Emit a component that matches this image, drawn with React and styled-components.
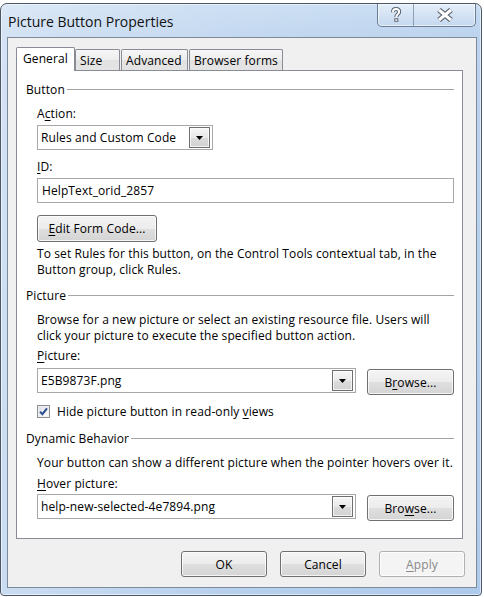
import React from 'react';
import styled, { createGlobalStyle } from 'styled-components';

const GlobalStyle = createGlobalStyle`
  html, body { margin: 0; padding: 0; background: #fff; }
  body {
    font-family: "Open Sans", "Noto Sans", "Liberation Sans", sans-serif;
    font-size: 12px;
    letter-spacing: 0.1px;
    color: #000;
  }
  * { box-sizing: border-box; }
  u { text-underline-offset: 2px; }
`;

const Window = styled.div`
  margin-top: 3px;
  width: 482px;
  height: 593px;
  border: 1px solid #4a5868;
  border-radius: 7px 7px 4px 4px;
  padding: 0 4px 7px 6px;
  display: flex;
  flex-direction: column;
  background:
    linear-gradient(90deg, rgba(255,255,255,0.35) 0%, rgba(255,255,255,0.12) 45%, rgba(255,255,255,0) 100%),
    linear-gradient(180deg, #c8dcf2 0%, #bcd3ee 34px, #aecaeb 100%);
  box-shadow: inset 0 0 0 1px rgba(255,255,255,0.55);
`;

const TitleBar = styled.div`
  height: 33px;
  display: flex;
  justify-content: space-between;
  align-items: flex-start;
`;

const TitleText = styled.div`
  margin: 8px 0 0 1px;
  font-size: 14px;
  letter-spacing: 0;
  line-height: 20px;
  color: #111;
`;

const Caption = styled.div`
  display: flex;
  height: 23px;
  margin-right: 1px;
  border: 1px solid #6b7d94;
  border-top: none;
  border-radius: 0 0 5px 5px;
  background: linear-gradient(180deg, #e4eef9 0%, #d4e3f4 50%, #c4d8ef 100%);
  box-shadow: inset 0 0 0 1px rgba(255,255,255,0.6);
  overflow: hidden;
`;

const CapBtn = styled.div`
  width: ${p => p.$w}px;
  display: flex;
  align-items: center;
  justify-content: center;
  & + & { border-left: 1px solid #8ea1b9; }
`;

const Client = styled.div`
  flex: 1;
  border: 1px solid #7d8a99;
  background: #f0f0f0;
  padding: 9px 0 0 8px;
  display: flex;
  flex-direction: column;
`;

const TabRow = styled.div`
  display: flex;
  align-items: flex-end;
  height: 23px;
  position: relative;
  z-index: 1;
`;

const Tab = styled.div`
  width: ${p => p.$w}px;
  height: ${p => (p.$active ? 24 : 21)}px;
  margin-bottom: ${p => (p.$active ? -1 : 0)}px;
  margin-left: ${p => p.$ml || 0}px;
  border: 1px solid #898c95;
  border-bottom: none;
  border-radius: 2px 2px 0 0;
  background: ${p => (p.$active
    ? '#fff'
    : 'linear-gradient(180deg, #f6f6f6 0%, #ededed 50%, #e2e2e2 51%, #e4e4e4 100%)')};
  padding: 3px 0 0 ${p => (p.$active ? 6 : 4)}px;
  line-height: 16px;
  white-space: nowrap;
  position: relative;
  z-index: ${p => (p.$active ? 2 : 0)};
`;

const Panel = styled.div`
  width: 447px;
  height: 469px;
  border: 1px solid #898c95;
  background: #fff;
  padding: 11px 8px 0 9px;
  display: flex;
  flex-direction: column;
`;

const Heading = styled.div`
  display: flex;
  align-items: center;
  height: 16px;
  line-height: 16px;
  margin-top: ${p => p.$mt || 0}px;
  white-space: nowrap;
  &::after {
    content: '';
    flex: 1;
    height: 1px;
    background: #a3a3a3;
    margin: -1px 0 0 2px;
  }
`;

const Indent = styled.div`
  margin-left: 11px;
  display: flex;
  flex-direction: column;
`;

const Label = styled.div`
  height: 16px;
  line-height: 16px;
  margin-top: ${p => p.$mt || 0}px;
  white-space: nowrap;
`;

const Para = styled.div`
  line-height: 16px;
  margin-top: ${p => p.$mt || 0}px;
  white-space: nowrap;
`;

const Select = styled.div`
  width: ${p => p.$w}px;
  height: 25px;
  margin-top: ${p => p.$mt || 0}px;
  border: 1px solid #a8a8a8;
  background: #fff;
  display: flex;
  align-items: center;
  padding-left: 3px;
  white-space: nowrap;
`;

const ArrowBox = styled.div`
  margin-left: auto;
  margin-right: 2px;
  width: 21px;
  height: 21px;
  border: 1px solid #6f6f6f;
  background: linear-gradient(180deg, #f6f6f6 0%, #e9e9e9 50%, #dcdcdc 51%, #d2d2d2 100%);
  box-shadow: inset 0 0 0 1px rgba(255,255,255,0.7);
  display: flex;
  align-items: center;
  justify-content: center;
  flex-shrink: 0;
`;

const TextBox = styled.div`
  height: 25px;
  margin-top: ${p => p.$mt || 0}px;
  border: 1px solid #a8a8a8;
  background: #fff;
  display: flex;
  align-items: center;
  padding-left: 4px;
`;

const Button = styled.div`
  width: ${p => p.$w}px;
  height: ${p => p.$h || 26}px;
  margin-top: ${p => p.$mt || 0}px;
  border: 1px solid ${p => (p.$disabled ? '#adb2b5' : '#707070')};
  border-radius: 3px;
  background: ${p => (p.$disabled
    ? '#f4f4f4'
    : 'linear-gradient(180deg, #f4f4f4 0%, #ececec 50%, #dfdfdf 51%, #d4d4d4 100%)')};
  box-shadow: inset 0 0 0 1px rgba(255,255,255,0.75);
  color: ${p => (p.$disabled ? '#8a8a8a' : '#000')};
  display: flex;
  align-items: center;
  justify-content: center;
  white-space: nowrap;
  flex-shrink: 0;
`;

const Row = styled.div`
  display: flex;
  justify-content: space-between;
  align-items: flex-start;
  margin-top: ${p => p.$mt || 0}px;
  & > ${Button} { margin-top: 1px; }
`;

const CheckRow = styled.div`
  display: flex;
  align-items: center;
  height: 16px;
  margin-top: ${p => p.$mt || 0}px;
  gap: 7px;
`;

const CheckBox = styled.div`
  width: 13px;
  height: 13px;
  border: 1px solid #8e8f8f;
  background: linear-gradient(135deg, #d8dde6 0%, #f4f6f9 70%, #ffffff 100%);
  box-shadow: inset 0 0 0 1px #f0f0f0;
  display: flex;
  align-items: center;
  justify-content: center;
`;

const Footer = styled.div`
  display: flex;
  justify-content: flex-end;
  gap: 13px;
  margin-top: 12px;
  padding-right: 11px;
`;

const Arrow = () => (
  <ArrowBox>
    <svg width="7" height="4" viewBox="0 0 7 4"><polygon points="0,0 7,0 3.5,4" fill="#000" /></svg>
  </ArrowBox>
);

const HelpGlyph = () => (
  <svg width="12" height="16" viewBox="0 0 12 16">
    <g fill="none" strokeLinecap="butt">
      <path d="M3 5.2 C3 3 4.4 2 6 2 C8 2 9.2 3.2 9.2 4.8 C9.2 7 6.3 7.3 6.3 10" stroke="#5b6370" strokeWidth="4" />
      <rect x="4.3" y="11.3" width="4" height="3.5" fill="#5b6370" stroke="none" />
      <path d="M3 5.2 C3 3 4.4 2 6 2 C8 2 9.2 3.2 9.2 4.8 C9.2 7 6.3 7.3 6.3 10" stroke="#fff" strokeWidth="2" />
      <rect x="5.3" y="12.3" width="2" height="1.6" fill="#fff" stroke="none" />
    </g>
  </svg>
);

const CloseGlyph = () => (
  <svg width="18" height="14" viewBox="0 0 18 14">
    <g strokeLinecap="butt">
      <path d="M3 2 L15 12 M15 2 L3 12" stroke="#5b6370" strokeWidth="5.4" />
      <path d="M3 2 L15 12 M15 2 L3 12" stroke="#fff" strokeWidth="3" />
    </g>
  </svg>
);

export default function App() {
  return (
    <>
      <GlobalStyle />
      <Window>
        <TitleBar>
          <TitleText>Picture Button Properties</TitleText>
          <Caption>
            <CapBtn $w={35}><HelpGlyph /></CapBtn>
            <CapBtn $w={62}><CloseGlyph /></CapBtn>
          </Caption>
        </TitleBar>
        <Client>
          <TabRow>
            <Tab $active $w={59}>General</Tab>
            <Tab $w={45}>Size</Tab>
            <Tab $w={67} $ml={1}>Advanced</Tab>
            <Tab $w={94} $ml={1}>Browser forms</Tab>
          </TabRow>
          <Panel>
            <Heading>Button</Heading>
            <Indent>
              <Label $mt={8}>A<u>c</u>tion:</Label>
              <Select $w={176} $mt={3}>
                Rules and Custom Code
                <Arrow />
              </Select>
              <Label $mt={9}><u>I</u>D:</Label>
              <TextBox $mt={3}>HelpText_orid_2857</TextBox>
              <Button $w={120} $h={27} $mt={12}><span><u>E</u>dit Form Code...</span></Button>
              <Para $mt={4}>
                To set Rules for this button, on the Control Tools contextual tab, in the<br />
                Button group, click Rules.
              </Para>
            </Indent>
            <Heading $mt={10}>Picture</Heading>
            <Indent>
              <Para $mt={8}>
                Browse for a new picture or select an existing resource file. Users will<br />
                click your picture to execute the specified button action.
              </Para>
              <Label $mt={4}><u>P</u>icture:</Label>
              <Row $mt={4}>
                <Select $w={319}>
                  E5B9873F.png
                  <Arrow />
                </Select>
                <Button $w={87}><span>B<u>r</u>owse...</span></Button>
              </Row>
              <CheckRow $mt={8}>
                <CheckBox>
                  <svg width="9" height="9" viewBox="0 0 9 9">
                    <path d="M1 4.6 L3.4 7.2 L8 1.4" fill="none" stroke="#2c4d8c" strokeWidth="2" />
                  </svg>
                </CheckBox>
                <span>Hide picture button in read-only <u>v</u>iews</span>
              </CheckRow>
            </Indent>
            <Heading $mt={12}>Dynamic Behavior</Heading>
            <Indent>
              <Para $mt={8}>Your button can show a different picture when the pointer hovers over it.</Para>
              <Label $mt={5}><u>H</u>over picture:</Label>
              <Row $mt={2}>
                <Select $w={319}>
                  help-new-selected-4e7894.png
                  <Arrow />
                </Select>
                <Button $w={87}><span>Bro<u>w</u>se...</span></Button>
              </Row>
            </Indent>
          </Panel>
          <Footer>
            <Button $w={86}>OK</Button>
            <Button $w={86}>Cancel</Button>
            <Button $w={86} $disabled><span><u>A</u>pply</span></Button>
          </Footer>
        </Client>
      </Window>
    </>
  );
}
